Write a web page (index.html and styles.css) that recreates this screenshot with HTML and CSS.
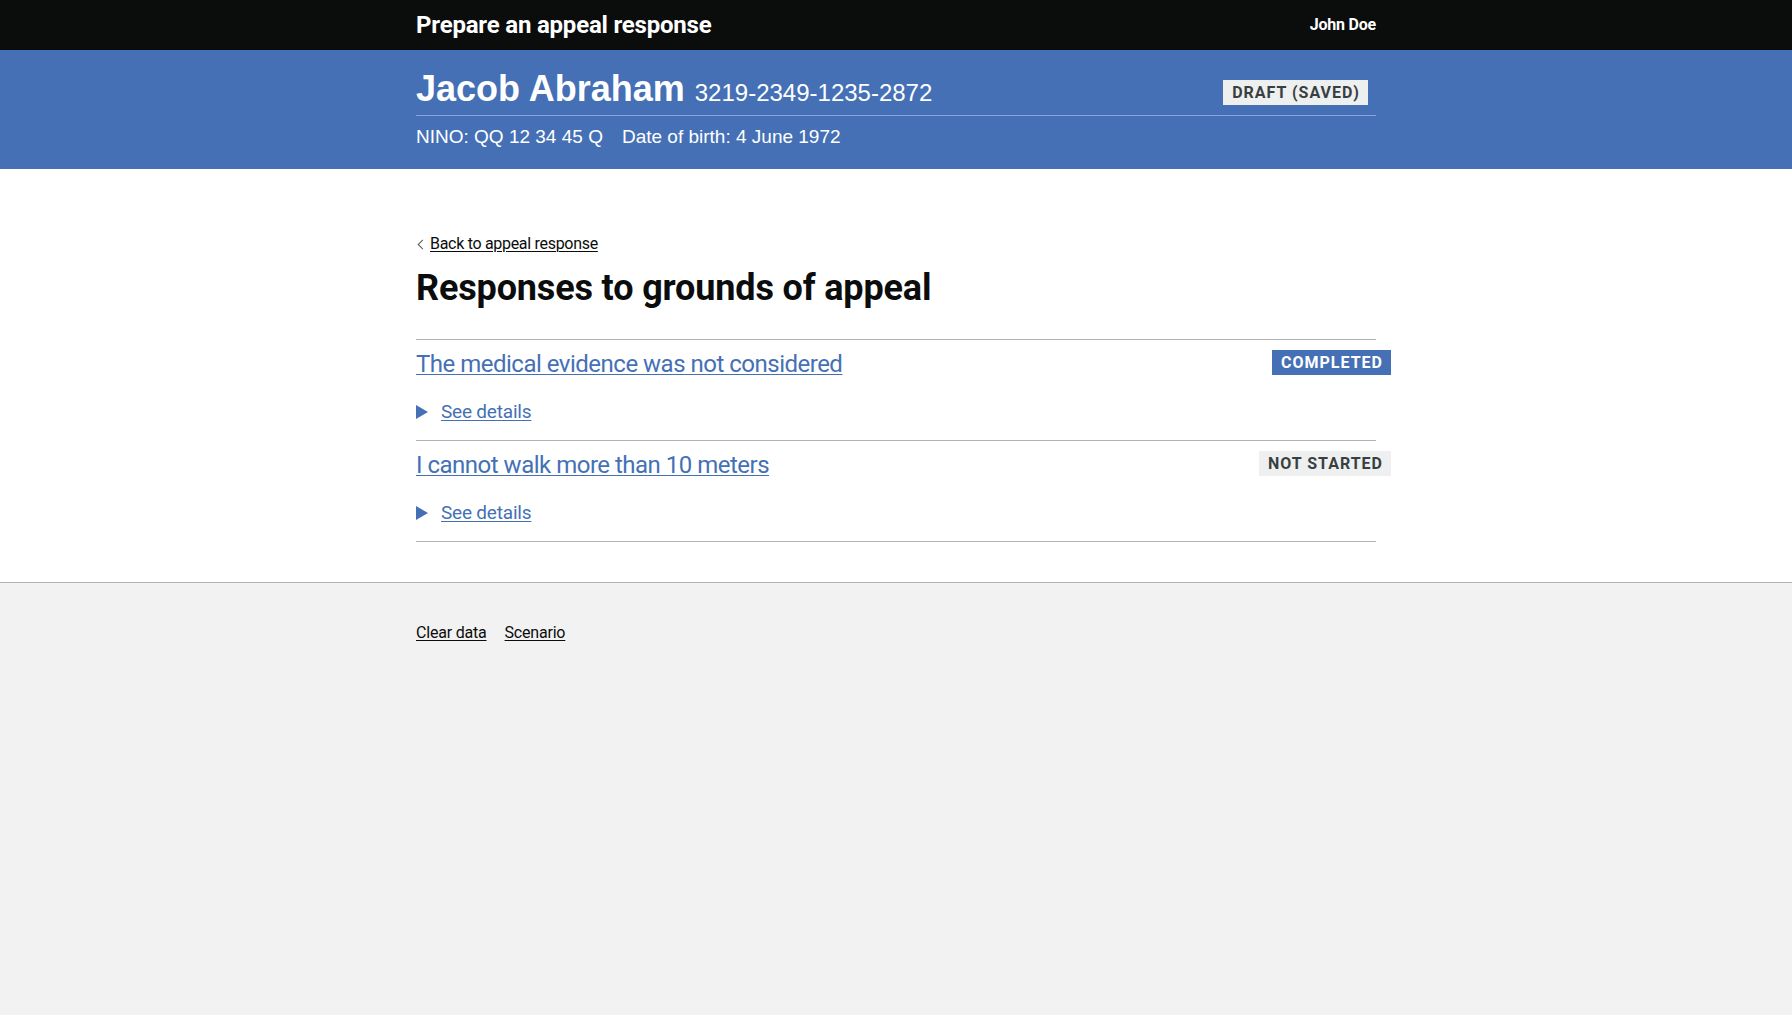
FILE: index.html
```html
<!DOCTYPE html>
<html lang="en">
<head>
<meta charset="utf-8">
<title>Responses to grounds of appeal - Prepare an appeal response</title>
<link rel="stylesheet" href="styles.css">
</head>
<body>
<header class="topbar">
  <div class="wrap topbar-inner">
    <a class="service-name" href="#">Prepare an appeal response</a>
    <span class="user-name">John Doe</span>
  </div>
</header>

<section class="banner">
  <div class="wrap">
    <div class="banner-row">
      <h1 class="person">Jacob Abraham <span class="person-ref">3219-2349-1235-2872</span></h1>
      <strong class="tag tag-light">Draft (saved)</strong>
    </div>
    <p class="person-meta">
      <span>NINO: QQ 12 34 45 Q</span>
      <span>Date of birth: 4 June 1972</span>
    </p>
  </div>
</section>

<main class="wrap main">
  <a class="back-link" href="#">Back to appeal response</a>
  <h2 class="heading">Responses to grounds of appeal</h2>

  <ul class="grounds">
    <li class="ground">
      <div class="ground-head">
        <a class="ground-link" href="#">The medical evidence was not considered</a>
        <strong class="tag tag-blue">Completed</strong>
      </div>
      <details class="details">
        <summary class="details-summary"><span class="details-text">See details</span></summary>
      </details>
    </li>
    <li class="ground">
      <div class="ground-head">
        <a class="ground-link" href="#">I cannot walk more than 10 meters</a>
        <strong class="tag tag-grey">Not started</strong>
      </div>
      <details class="details">
        <summary class="details-summary"><span class="details-text">See details</span></summary>
      </details>
    </li>
  </ul>
</main>

<footer class="footer">
  <div class="wrap footer-links">
    <a class="footer-link" href="#">Clear data</a>
    <a class="footer-link" href="#">Scenario</a>
  </div>
</footer>
</body>
</html>
```

FILE: styles.css
```css
* { box-sizing: border-box; }

html, body { height: 100%; }

body {
  margin: 0;
  font-family: Roboto, "Liberation Sans", Arial, sans-serif;
  color: #0b0c0c;
  background: #ffffff;
  display: flex;
  flex-direction: column;
  min-height: 100vh;
}

.wrap {
  width: 960px;
  margin: 0 auto;
}

/* Top bar */
.topbar {
  background: #0b0c0c;
  height: 50px;
}
.topbar-inner {
  height: 50px;
  display: flex;
  align-items: center;
  justify-content: space-between;
}
.service-name {
  color: #ffffff;
  font-weight: 700;
  font-size: 24px;
  line-height: 24px;
  letter-spacing: -0.2px;
  text-decoration: none;
}
.user-name {
  color: #ffffff;
  font-weight: 700;
  font-size: 16px;
  line-height: 16px;
  letter-spacing: -0.2px;
}

/* Person banner */
.banner {
  background: #4570b6;
  color: #ffffff;
  padding: 19px 0 20px;
  font-family: "Liberation Sans", Arial, Helvetica, sans-serif;
}
.banner-row {
  display: flex;
  justify-content: space-between;
  align-items: flex-start;
  padding-bottom: 6px;
  border-bottom: 1px solid #86a6e2;
}
.person {
  margin: 0;
  font-size: 36px;
  line-height: 40px;
  font-weight: 700;
}
.person-ref {
  font-size: 24px;
  line-height: 24px;
  font-weight: 400;
}
.person-meta {
  margin: 0;
  padding-top: 9px;
  font-size: 19px;
  line-height: 24px;
  display: flex;
  gap: 19px;
}

/* Tags */
.tag {
  display: inline-block;
  font-family: Roboto, "Liberation Sans", Arial, sans-serif;
  font-weight: 700;
  font-size: 16px;
  line-height: 16px;
  letter-spacing: 1px;
  text-transform: uppercase;
  padding: 5px 8px 4px 9px;
  white-space: nowrap;
}
.tag-light {
  background: #eeefef;
  color: #383f43;
  margin-top: 11px;
  margin-right: 8px;
}
.tag-blue {
  background: #4570b6;
  color: #ffffff;
}
.tag-grey {
  background: #eeefef;
  color: #383f43;
}

/* Main */
.main {
  flex: 0 0 auto;
  padding: 65px 0 40px;
  display: flex;
  flex-direction: column;
  align-items: flex-start;
}
.back-link {
  position: relative;
  padding-left: 14px;
  font-size: 16px;
  line-height: 20px;
  letter-spacing: -0.3px;
  color: #0b0c0c;
  text-decoration: underline;
  text-decoration-thickness: 1px;
  text-underline-offset: 0.1em;
}
.back-link::before {
  content: "";
  position: absolute;
  left: 3px;
  top: 7px;
  width: 6px;
  height: 6px;
  border-left: 1px solid #505a5f;
  border-bottom: 1px solid #505a5f;
  transform: rotate(45deg);
}
.heading {
  margin: 14px 0 31px;
  font-size: 36px;
  line-height: 40px;
  font-weight: 700;
  letter-spacing: -0.15px;
}

.grounds {
  list-style: none;
  margin: 0;
  padding: 0;
  width: 100%;
  border-top: 1px solid #b1b4b6;
}
.ground {
  padding: 9px 0 16px;
  border-bottom: 1px solid #b1b4b6;
}
.ground-head {
  display: flex;
  justify-content: space-between;
  align-items: flex-start;
  margin-right: -15px;
}
.ground-head .tag {
  margin-top: 1px;
}
.ground-link {
  font-size: 24px;
  line-height: 30px;
  letter-spacing: -0.5px;
  color: #4570b6;
  text-decoration: underline;
  text-decoration-thickness: 1px;
  text-underline-offset: 0.08em;
}

.details {
  margin-top: 20px;
  font-size: 19px;
  line-height: 25px;
}
.details-summary {
  position: relative;
  display: inline-block;
  padding-left: 25px;
  color: #4570b6;
  cursor: pointer;
  list-style: none;
  letter-spacing: -0.2px;
}
.details-summary::-webkit-details-marker { display: none; }
.details-summary::before {
  content: "";
  position: absolute;
  left: 0;
  top: 6px;
  width: 0;
  height: 0;
  border-style: solid;
  border-color: transparent;
  border-width: 7px 0 7px 12px;
  border-left-color: #4570b6;
}
.details[open] .details-summary::before {
  border-width: 12px 7px 0 7px;
  border-color: transparent;
  border-top-color: #4570b6;
}
.details-text {
  text-decoration: underline;
  text-decoration-thickness: 1px;
  text-underline-offset: 0.08em;
}

/* Footer */
.footer {
  flex: 1 0 auto;
  background: #f2f2f2;
  border-top: 1px solid #b1b4b6;
  padding-top: 40px;
}
.footer-links {
  display: flex;
  gap: 18px;
}
.footer-link {
  font-size: 16px;
  line-height: 20px;
  letter-spacing: -0.2px;
  color: #0b0c0c;
  text-decoration: underline;
  text-decoration-thickness: 1px;
  text-underline-offset: 0.1em;
}
```
